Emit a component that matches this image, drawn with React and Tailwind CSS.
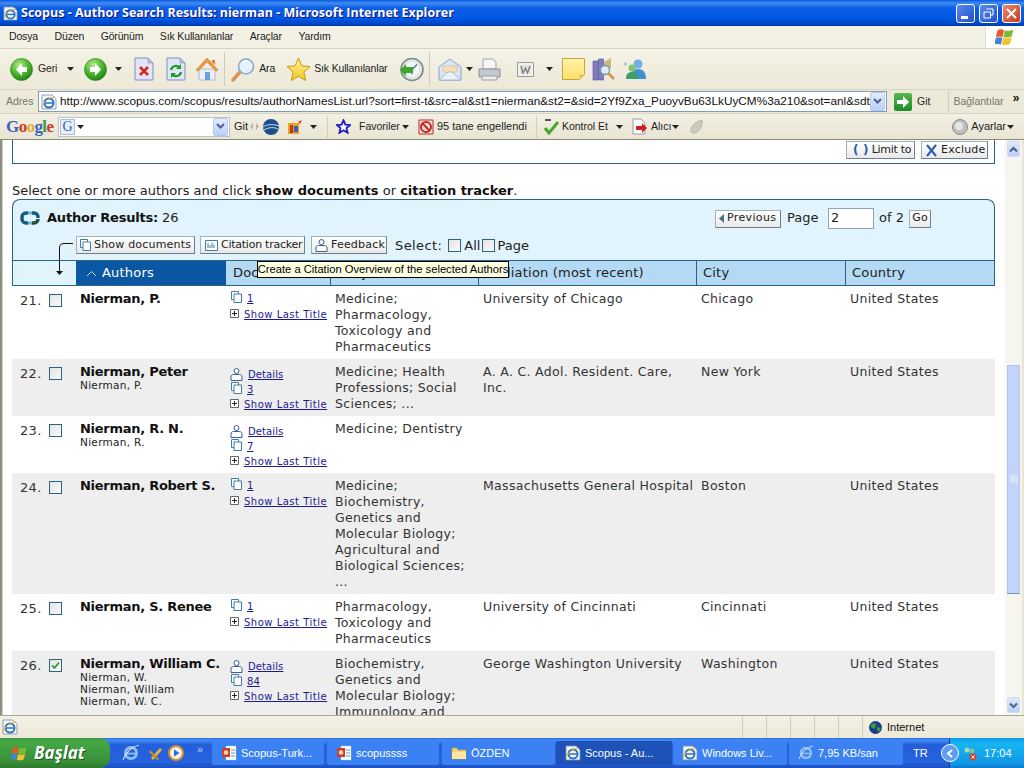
import React from "react";

const Caret = ({ className = "" }) => (
  <svg width="7" height="4" viewBox="0 0 7 4" className={className}><path d="M0 0h7L3.500 4z" fill="#222" /></svg>
);

const NavCircle = ({ dir = "left", id }) => (
  <svg width="23" height="23" viewBox="0 0 23 23">
    <defs>
      <radialGradient id={id} cx="40%" cy="30%" r="75%">
        <stop offset="0" stopColor="#b4ea8f" /><stop offset=".55" stopColor="#4cb52c" /><stop offset="1" stopColor="#1d7a14" />
      </radialGradient>
    </defs>
    <circle cx="11.500" cy="11.500" r="11" fill={`url(#${id})`} stroke="#2d8a22" strokeWidth=".7" />
    <path d={dir === "left" ? "M12 5l-6 6.500 6 6.500v-4h5v-5h-5z" : "M11 5l6 6.500-6 6.500v-4H6v-5h5z"} fill="#fff" />
  </svg>
);

const DocBase = ({ children }) => (
  <svg width="20" height="24" viewBox="0 0 20 24">
    <path d="M1 1h13l5 5v17H1z" fill="#dfe6f7" stroke="#7f8fb5" />
    <path d="M14 1v5h5z" fill="#b9c6e6" stroke="#7f8fb5" strokeWidth=".6" />
    {children}
  </svg>
);

const StopIcon = () => <DocBase><path d="M6 10l8 8M14 10l-8 8" stroke="#d9281c" strokeWidth="2.600" /></DocBase>;
const RefreshIcon = () => (
  <DocBase>
    <path d="M5 13a5 5 0 0 1 9-2" fill="none" stroke="#1f9a2a" strokeWidth="2.200" />
    <path d="M15 7v5h-5z" fill="#1f9a2a" />
    <path d="M15 15a5 5 0 0 1-9 2" fill="none" stroke="#1f9a2a" strokeWidth="2.200" />
    <path d="M5 21v-5h5z" fill="#1f9a2a" />
  </DocBase>
);
const HomeIcon = () => (
  <svg width="24" height="24" viewBox="0 0 24 24">
    <path d="M4 12h16v11H4z" fill="#e9eef7" stroke="#9aa7bd" strokeWidth=".7" />
    <path d="M10 15h5v8h-5z" fill="#6b9fd8" />
    <path d="M1 13L12 1l11 12-2 1-9-9-9 9z" fill="#ee9b3c" stroke="#c87520" strokeWidth=".6" />
    <path d="M17 3h3v5l-3-3z" fill="#d9812c" />
  </svg>
);
const SearchIcon = () => (
  <svg width="25" height="25" viewBox="0 0 25 25">
    <path d="M2 23l7-8" stroke="#d89358" strokeWidth="3.500" strokeLinecap="round" />
    <circle cx="15" cy="9.500" r="7.500" fill="#e6f2fb" stroke="#86aacb" strokeWidth="1.600" />
    <path d="M11 7a5 5 0 0 1 5-3" stroke="#fff" strokeWidth="1.500" fill="none" />
  </svg>
);
const StarIcon = () => (
  <svg width="25" height="25" viewBox="0 0 25 25">
    <defs><linearGradient id="st" x1="0" y1="0" x2="0" y2="1"><stop offset="0" stopColor="#fff39a" /><stop offset="1" stopColor="#f2c81e" /></linearGradient></defs>
    <path d="M12.500 1l3.400 7.800 8.100.8-6.100 5.500 1.800 8.400-7.200-4.300-7.200 4.300 1.800-8.400L1 9.600l8.100-.8z" fill="url(#st)" stroke="#c39a12" />
  </svg>
);
const HistoryIcon = () => (
  <svg width="25" height="25" viewBox="0 0 25 25">
    <circle cx="13" cy="12.500" r="11" fill="#dfe7e4" stroke="#7d8a8d" strokeWidth="1.600" />
    <circle cx="13" cy="12.500" r="7.500" fill="#f3f6f7" />
    <path d="M13 12.500l5-5M13 12.500v5" stroke="#3b6aa8" strokeWidth="1.200" />
    <path d="M1 13l6-6v3h7v6H7v3z" fill="#3fa52b" />
  </svg>
);
const MailIcon = () => (
  <svg width="24" height="24" viewBox="0 0 24 24">
    <path d="M1 10L12 2l11 8v13H1z" fill="#dbe7f6" stroke="#86a4c9" />
    <path d="M5 9h14v5l-7 4-7-4z" fill="#f6dfb6" stroke="#cfae78" strokeWidth=".5" />
    <path d="M1 23l9-8h4l9 8z" fill="#edf3fb" stroke="#86a4c9" strokeWidth=".7" />
  </svg>
);
const PrinterIcon = () => (
  <svg width="23" height="23" viewBox="0 0 23 23">
    <path d="M5 1h10l3 3v7H5z" fill="#f5f5f5" stroke="#a0a5ad" />
    <path d="M1 11h21v8H1z" fill="#c4c8cf" stroke="#8a8f98" />
    <path d="M4 18h15v4H4z" fill="#eceef1" stroke="#9a9fa7" />
  </svg>
);
const WordIcon = () => (
  <svg width="17" height="17" viewBox="0 0 17 17">
    <path d="M.5 1.500h16v14H.5z" fill="#f2f2f0" stroke="#9a9a96" />
    <path d="M3 4h11v9H3z" fill="#e1e1de" />
    <path d="M4 5l2 7 2.500-5 2 5L13 5" fill="none" stroke="#777" strokeWidth="1.200" />
  </svg>
);
const NoteIcon = () => (
  <svg width="23" height="22" viewBox="0 0 23 22">
    <defs><linearGradient id="nt" x1="0" y1="0" x2="0" y2="1"><stop offset="0" stopColor="#fff3a8" /><stop offset="1" stopColor="#ffe06a" /></linearGradient></defs>
    <path d="M.5.500h22v16l-5 5H.5z" fill="url(#nt)" stroke="#c9a437" />
    <path d="M17.500 21.500v-5h5z" fill="#e5c45a" />
  </svg>
);
const ResearchIcon = () => (
  <svg width="23" height="24" viewBox="0 0 23 24">
    <path d="M1 4h5v19H1zM6.500 2h5v21h-5z" fill="#7f7dbd" stroke="#55539a" strokeWidth=".6" />
    <path d="M12 5l7-4v10l-7 7z" fill="#c7b783" />
    <circle cx="13" cy="13" r="4.500" fill="#dcecf8" stroke="#7d93a8" strokeWidth="1.300" />
    <path d="M16 16l6 6" stroke="#c79a45" strokeWidth="2.500" />
  </svg>
);
const MessengerIcon = () => (
  <svg width="24" height="21" viewBox="0 0 24 21">
    <circle cx="15" cy="5" r="4.500" fill="#6fb1e5" />
    <path d="M7 20c0-7 3-10 8-10s8 3 8 10z" fill="#3f93ce" />
    <circle cx="9" cy="9" r="3.500" fill="#7ec66a" />
    <path d="M3 20c0-5 2-7 6-7s6 2 6 7z" fill="#3f9c6f" />
    <path d="M1 5h3M2.500 3.500v3" stroke="#7aa" strokeWidth=".8" />
  </svg>
);
const IEIcon = ({ size = 16 }) => (
  <svg width={size} height={size} viewBox="0 0 16 16" className="shrink-0">
    <path d="M1 1h10l4 4v10H1z" fill="#f6f6f6" stroke="#7a8fa8" strokeWidth=".8" />
    <circle cx="8" cy="9" r="4.500" fill="none" stroke="#2b74c7" strokeWidth="2" />
    <path d="M4 9h8" stroke="#2b74c7" strokeWidth="1.500" />
    <path d="M1 13C3 7 9 3 14 3" stroke="#e6b13a" strokeWidth="1" fill="none" />
  </svg>
);
const Eglyph = ({ size = 16, color = "#8fc0f2" }) => (
  <svg width={size} height={size} viewBox="0 0 16 16" className="shrink-0">
    <circle cx="8" cy="8" r="5" fill="none" stroke={color} strokeWidth="2.400" />
    <path d="M3.500 8.500h9" stroke={color} strokeWidth="1.600" />
    <path d="M1 14C3 8 9 2 15 1" stroke="#d7e9fb" strokeWidth=".9" fill="none" />
  </svg>
);
const WinFlag = ({ size = 24 }) => (
  <svg width={size} height={size} viewBox="0 0 24 24">
    <path d="M3 4c3-2 5-1 8 0l-2 8c-3-1-5-1-8 0z" fill="#e8582a" />
    <path d="M12 4c3 1 6 1 10-1l-2 8c-3 2-7 2-10 1z" fill="#7cbb32" />
    <path d="M1 13c3-1 5-1 8 0l-2 8c-3-1-5-1-8 0z" fill="#3d86d8" />
    <path d="M10 13c3 1 6 1 10-1l-2 8c-3 2-7 2-10 1z" fill="#f4c22e" />
  </svg>
);
const DropBtn = ({ w = "w-[15px]", h = "h-[19px]" }) => (
  <span className={`${w} ${h} shrink-0 flex items-center justify-center rounded-[2px] border border-[#b4c8f2] bg-[linear-gradient(#e3ecfd,#bccff8)]`}>
    <svg width="9" height="7" viewBox="0 0 9 7"><path d="M1 1l3.500 3.500L8 1" fill="none" stroke="#4c5f96" strokeWidth="2" /></svg>
  </span>
);

const StackDocs = () => (
  <svg width="11" height="12" viewBox="0 0 11 12" className="shrink-0">
    <path d="M.5.500h7v8h-7z" fill="#fff" stroke="#3f7fa6" />
    <path d="M3 3h7.500v8.500H3z" fill="#fff" stroke="#3f7fa6" />
  </svg>
);
const Person = () => (
  <svg width="13" height="13" viewBox="0 0 13 13" className="shrink-0">
    <circle cx="6.500" cy="3" r="2.500" fill="#fff" stroke="#3b5d95" />
    <path d="M1 12.500V9c0-1.500 1-2.500 2.500-2.500h6C11 6.500 12 7.500 12 9v3.500z" fill="#fff" stroke="#3b5d95" />
  </svg>
);
const PlusBox = () => (
  <svg width="9" height="9" viewBox="0 0 9 9" className="shrink-0">
    <path d="M.5.500h8v8h-8z" fill="#fff" stroke="#666" />
    <path d="M2 4.500h5M4.500 2v5" stroke="#222" />
  </svg>
);

const Check = ({ checked }) => (
  <span className="w-[13px] h-[13px] shrink-0 flex items-center justify-center border border-[#2a6480] bg-[linear-gradient(135deg,#e4e4e4,#fafafa)]">
    {checked && (
      <svg width="9" height="9" viewBox="0 0 9 9"><path d="M1 4.500l2.500 2.500L8 1.500" fill="none" stroke="#2f9a34" strokeWidth="1.800" /></svg>
    )}
  </span>
);

const Btn = ({ className = "", children }) => (
  <span className={`h-[18px] flex items-center gap-[3px] px-[3px] text-[11px] tracking-[.2px] text-[#222] border border-[#9fb1bb] border-r-[#6f7f89] border-b-[#6f7f89] bg-[linear-gradient(#ffffff,#e9e9e9)] whitespace-nowrap ${className}`}>
    {children}
  </span>
);

const DocLink = ({ children, wide }) => (
  <a className={`text-[10px] leading-[15px] whitespace-nowrap text-[#1b1b8f] underline ${wide ? "tracking-[.5px]" : "tracking-[.1px]"}`}>{children}</a>
);

const rows = [
  { n: "21.", name: "Nierman, P.", alts: [], details: false, docs: "1", subj: ["Medicine;", "Pharmacology,", "Toxicology and", "Pharmaceutics"], aff: "University of Chicago", city: "Chicago", country: "United States" },
  { n: "22.", name: "Nierman, Peter", alts: ["Nierman, P."], details: true, docs: "3", subj: ["Medicine; Health", "Professions; Social", "Sciences; ..."], aff: "A. A. C. Adol. Resident. Care, Inc.", city: "New York", country: "United States" },
  { n: "23.", name: "Nierman, R. N.", alts: ["Nierman, R."], details: true, docs: "7", subj: ["Medicine; Dentistry"], aff: "", city: "", country: "" },
  { n: "24.", name: "Nierman, Robert S.", alts: [], details: false, docs: "1", subj: ["Medicine;", "Biochemistry,", "Genetics and", "Molecular Biology;", "Agricultural and", "Biological Sciences;", "..."], aff: "Massachusetts General Hospital", city: "Boston", country: "United States" },
  { n: "25.", name: "Nierman, S. Renee", alts: [], details: false, docs: "1", subj: ["Pharmacology,", "Toxicology and", "Pharmaceutics"], aff: "University of Cincinnati", city: "Cincinnati", country: "United States" },
  { n: "26.", name: "Nierman, William C.", alts: ["Nierman, W.", "Nierman, William", "Nierman, W. C."], details: true, docs: "84", subj: ["Biochemistry,", "Genetics and", "Molecular Biology;", "Immunology and"], aff: "George Washington University", city: "Washington", country: "United States", checked: true },
];

const cols = "grid grid-cols-[64px_150px_104px_148px_218px_149px_150px]";

const Row = ({ r, i }) => (
  <div className={`${cols} pt-[5px] pb-1 min-h-[57px] text-[12.500px] leading-4 tracking-[.32px] text-[#333] ${i % 2 ? "bg-[#eeeeee]" : "bg-white"}`}>
    <div className="flex items-start pl-2">
      <span className="w-[29px] mt-[2px] text-[13px]">{r.n}</span>
      <span className="mt-[3px]"><Check checked={r.checked} /></span>
    </div>
    <div className="pl-1">
      <div className="text-[13px] leading-4 tracking-[-.27px] font-bold text-[#111] whitespace-nowrap">{r.name}</div>
      <div className="-mt-px">
        {r.alts.map((a) => (
          <div key={a} className="text-[10.500px] leading-3 tracking-[.3px] text-[#222]">{a}</div>
        ))}
      </div>
    </div>
    <div className="pl-1 flex flex-col">
      {r.details && (
        <div className="h-[15px] mt-[3px] flex items-center gap-[5px]"><Person /><DocLink>Details</DocLink></div>
      )}
      <div className="h-[15px] flex items-center gap-[5px] pl-px"><span className="mt-[-3px]"><StackDocs /></span><DocLink>{r.docs}</DocLink></div>
      <div className={`h-[15px] flex items-center gap-[5px] ${r.details ? "" : "mt-[1px]"}`}><span className="mt-[-3px]"><PlusBox /></span><DocLink wide>Show Last Title</DocLink></div>
    </div>
    <div className="pl-[5px]">{r.subj.map((s) => <div key={s} className="whitespace-nowrap">{s}</div>)}</div>
    <div className="pl-[5px]">{r.aff}</div>
    <div className="pl-[5px]">{r.city}</div>
    <div className="pl-[5px]">{r.country}</div>
  </div>
);

const Head = ({ children, className = "border-l border-[#2a6480]" }) => (
  <div className={`flex items-center bg-[#b3d9f5] pl-[6px] text-[13px] tracking-[.2px] text-[#222] ${className}`}>{children}</div>
);

const ScrollBtn = ({ up }) => (
  <span className="mx-[2px] h-[16px] flex items-center justify-center rounded-[2px] border border-[#d2dcf6] bg-[linear-gradient(#dfe8fd,#bccff9)]">
    <svg width="9" height="7" viewBox="0 0 9 7"><path d={up ? "M1 5.500l3.500-3.500L8 5.500" : "M1 1.500l3.500 3.500L8 1.500"} fill="none" stroke="#4d6185" strokeWidth="2" /></svg>
  </span>
);

const Task = ({ w, icon, label, active }) => (
  <div className={`${w} h-[24px] shrink-0 flex items-center gap-[4px] pl-[9px] rounded-[2px] text-white text-[11px] whitespace-nowrap ${active ? "bg-[#1e52b7]" : "bg-[#3c81f3]"}`}>
    {icon}
    <span>{label}</span>
  </div>
);
const PptIcon = () => (
  <svg width="16" height="16" viewBox="0 0 16 16" className="shrink-0">
    <path d="M5 1h10v14H5z" fill="#fff" stroke="#8da" strokeWidth=".4" />
    <path d="M1 3h8v9H1z" fill="#c8402b" />
    <circle cx="5" cy="7.500" r="2.300" fill="#f3d7a5" />
    <path d="M10 5h4M10 8h4M10 11h4" stroke="#7a8aa8" />
  </svg>
);
const FolderIcon = () => (
  <svg width="16" height="14" viewBox="0 0 16 14" className="shrink-0"><path d="M1 2h5l1 2h8v9H1z" fill="#f4d67c" stroke="#b8923a" strokeWidth=".6" /><path d="M1 6h14v7H1z" fill="#fbe6a2" /></svg>
);

export default function App() {
  return (
    <div className="w-[1024px] h-[768px] overflow-hidden flex flex-col bg-[#ece9d8] font-['Liberation_Sans',sans-serif]">
      {/* Title bar */}
      <div className="h-[26px] shrink-0 flex items-center pl-[3px] pr-[3px] bg-[linear-gradient(#0a5ae0_0%,#3f8cf3_12%,#0d5fe4_30%,#0058e6_70%,#0048c8_90%,#003dae_100%)]">
        <IEIcon size={15} />
        <span className="ml-[3px] font-['Open_Sans',sans-serif] font-bold text-[12.500px] text-white whitespace-nowrap [text-shadow:1px_1px_#0f1089]">Scopus - Author Search Results: nierman - Microsoft Internet Explorer</span>
        <div className="ml-auto flex gap-[4px]">
          <span className="w-[19px] h-[19px] rounded-[3px] border border-white bg-[linear-gradient(135deg,#5a8af0,#2350c8)] flex items-end pl-[4px] pb-[3px]"><span className="w-[7px] h-[3px] bg-white" /></span>
          <span className="w-[19px] h-[19px] rounded-[3px] border border-white bg-[linear-gradient(135deg,#5a8af0,#2350c8)] flex items-center justify-center">
            <svg width="11" height="11" viewBox="0 0 11 11"><path d="M3.500 1h6.500v6H8M1 4h6.500v6H1z" fill="none" stroke="#fff" /></svg>
          </span>
          <span className="w-[19px] h-[19px] rounded-[3px] border border-white bg-[linear-gradient(135deg,#e88a70,#c63a1a)] flex items-center justify-center">
            <svg width="11" height="11" viewBox="0 0 11 11"><path d="M1 1l9 9M10 1l-9 9" stroke="#fff" strokeWidth="2" /></svg>
          </span>
        </div>
      </div>
      {/* Menu */}
      <div className="h-[23px] shrink-0 flex items-center pl-[9px] text-[10.500px] tracking-[-.15px] text-[#1c1c1c] bg-[#f3f0e4] border-b border-[#d8d4c2] gap-[16.500px]">
        <span>Dosya</span><span>Düzen</span><span>Görünüm</span><span>Sık Kullanılanlar</span><span>Araçlar</span><span>Yardım</span>
        <span className="ml-auto w-[39px] h-full flex items-center justify-center bg-white border-l border-[#e3e0d2]"><WinFlag size={20} /></span>
      </div>
      {/* Toolbar */}
      <div className="h-[41px] shrink-0 flex items-center pl-[10px] text-[10.500px] tracking-[-.15px] text-[#1c1c1c] bg-[linear-gradient(#f5f2e7,#ece9d8)] border-b border-[#d8d4c2]">
        <NavCircle dir="left" id="nb" />
        <span className="ml-[5px]">Geri</span>
        <Caret className="ml-[10px]" />
        <span className="ml-[10px]"><NavCircle dir="right" id="nf" /></span>
        <Caret className="ml-[8px]" />
        <span className="ml-[12px]"><StopIcon /></span>
        <span className="ml-[12px]"><RefreshIcon /></span>
        <span className="ml-[9px]"><HomeIcon /></span>
        <span className="ml-[5px] w-px h-[34px] bg-[#cfcbb8]" />
        <span className="ml-[6px]"><SearchIcon /></span>
        <span className="ml-[3px]">Ara</span>
        <span className="ml-[11px]"><StarIcon /></span>
        <span className="ml-[3px] whitespace-nowrap">Sık Kullanılanlar</span>
        <span className="ml-[12px]"><HistoryIcon /></span>
        <span className="ml-[5px] w-px h-[34px] bg-[#cfcbb8]" />
        <span className="ml-[8px]"><MailIcon /></span>
        <Caret className="ml-[4px]" />
        <span className="ml-[5px]"><PrinterIcon /></span>
        <span className="ml-[16px]"><WordIcon /></span>
        <Caret className="ml-[12px]" />
        <span className="ml-[9px]"><NoteIcon /></span>
        <span className="ml-[7px]"><ResearchIcon /></span>
        <span className="ml-[8px]"><MessengerIcon /></span>
      </div>
      {/* Address */}
      <div className="h-[24px] shrink-0 flex items-center pl-[6px] text-[10.500px] bg-[#ece9d8] border-b border-[#d8d4c2]">
        <span className="w-[32px] text-[#77756a]">Adres</span>
        <div className="w-[849px] h-[21px] flex items-center pl-[2px] pr-px bg-white border border-[#7f9db9]">
          <IEIcon size={16} />
          <span className="ml-[3px] flex-1 min-w-0 overflow-hidden whitespace-nowrap text-[11.800px] text-[#111]">http://www.scopus.com/scopus/results/authorNamesList.url?sort=first-t&amp;src=al&amp;st1=nierman&amp;st2=&amp;sid=2Yf9Zxa_PuoyvBu63LkUyCM%3a210&amp;sot=anl&amp;sdt=anl&amp;sl=25</span>
          <DropBtn />
        </div>
        <span className="ml-[7px] w-[18px] h-[18px] rounded-[2px] bg-[linear-gradient(#54b948,#1f8a2b)] flex items-center justify-center">
          <svg width="14" height="12" viewBox="0 0 14 12"><path d="M7 0l6 6-6 6V8H1V4h6z" fill="#fff" /></svg>
        </span>
        <span className="ml-[5px] text-[#222]">Git</span>
        <span className="ml-[18px] w-px h-[22px] bg-[#d2ceba]" />
        <span className="ml-[4px] text-[#77756a] whitespace-nowrap">Bağlantılar</span>
        <span className="ml-[9px] mt-[-8px] text-[12px] leading-3 font-bold text-[#111]">»</span>
      </div>
      {/* Google bar */}
      <div className="h-[25px] shrink-0 flex items-center pl-[6px] text-[11px] text-[#222] bg-[linear-gradient(#f3f0e4,#e8e5d4)]">
        <span className="w-[52px] font-['Liberation_Serif',serif] font-bold text-[17px] leading-5 tracking-[-.6px]">
          <span className="text-[#3a62c4]">G</span><span className="text-[#d0392b]">o</span><span className="text-[#e3b02c]">o</span><span className="text-[#3a62c4]">g</span><span className="text-[#3c9b3e]">l</span><span className="text-[#d0392b]">e</span>
        </span>
        <div className="w-[172px] h-[20px] flex items-center pl-[1px] pr-px bg-white border border-[#b9c4cc]">
          <span className="w-[15px] h-[16px] flex items-center justify-center border border-[#aebfd4] bg-[#e6eef7] font-['Liberation_Serif',serif] text-[14px] leading-4 text-[#3a62c4]">G</span>
          <Caret className="ml-[2px]" />
          <span className="ml-auto"><DropBtn h="h-[18px]" /></span>
        </div>
        <span className="ml-[4px] w-[13px]">Git</span>
        <svg className="ml-[3px]" width="9" height="7" viewBox="0 0 9 7"><path d="M3 0v7L0 3.500zM6 0v7l3-3.500z" fill="#b8b6a8" /></svg>
        <svg className="ml-[4px]" width="16" height="16" viewBox="0 0 16 16"><circle cx="8" cy="8" r="8" fill="#1f4f8a" /><path d="M0 8c4-3 11-3 16-1M1 11c5-3 10-3 14-1" stroke="#cfe1f3" fill="none" /></svg>
        <svg className="ml-[8px]" width="16" height="17" viewBox="0 0 16 17"><path d="M1 5h11v11H1z" fill="#e4a51f" /><path d="M3 7h3v8H3z" fill="#c7331f" /><path d="M7 8h4v6H7z" fill="#3b5fb4" /><path d="M9 1l2 3 4-2-2 4" fill="#c7331f" /></svg>
        <Caret className="ml-[7px]" />
        <span className="ml-[10px] w-px h-[22px] bg-[#d2ceba]" />
        <svg className="ml-[8px]" width="15" height="15" viewBox="0 0 25 25"><path d="M12.500 2l3.100 7.300 7.900.7-6 5.200 1.800 7.800-6.800-4.100-6.800 4.100 1.800-7.800-6-5.200 7.900-.7z" fill="#fff" stroke="#1a1ac4" strokeWidth="3" /></svg>
        <span className="ml-[8px] w-[42px] text-[10.500px]">Favoriler</span><Caret className="ml-px" />
        <svg className="ml-[9px]" width="16" height="16" viewBox="0 0 16 16"><path d="M1 1h14v14H1z" fill="#f4dcd8" stroke="#a33" /><circle cx="8" cy="8" r="5" fill="none" stroke="#c92a20" strokeWidth="2" /><path d="M4 4l8 8" stroke="#c92a20" strokeWidth="2" /></svg>
        <span className="ml-[3px] whitespace-nowrap">95 tane engellendi</span>
        <span className="ml-[9px] w-px h-[22px] bg-[#d2ceba]" />
        <svg className="ml-[7px]" width="16" height="16" viewBox="0 0 16 16"><path d="M1 9l4 5 9-11" fill="none" stroke="#4ca62e" strokeWidth="3" /><path d="M1 1h6" stroke="#556" strokeWidth="2" /></svg>
        <span className="ml-[2px] whitespace-nowrap text-[10.500px]">Kontrol Et</span>
        <Caret className="ml-[8px]" />
        <svg className="ml-[8px]" width="17" height="17" viewBox="0 0 17 17"><path d="M2 1h8l4 4v11H2z" fill="#fff" stroke="#999" /><path d="M5 8h6V5l5 5-5 5v-3H5z" fill="#d21f1f" /></svg>
        <span className="ml-[3px] text-[10.500px]">Alıcı</span><Caret className="ml-px" />
        <svg className="ml-[10px]" width="15" height="15" viewBox="0 0 15 15"><path d="M2 13c-1-4 3-10 11-12 1 5-2 11-7 13z" fill="#cdcbbe" stroke="#b7b5a8" /></svg>
        <svg className="ml-auto" width="16" height="16" viewBox="0 0 16 16"><circle cx="8" cy="8" r="7.500" fill="#bfbfbf" stroke="#8a8a8a" /><circle cx="7" cy="7" r="4" fill="#e6e6e6" /></svg>
        <span className="ml-[3px]">Ayarlar</span><Caret className="ml-px mr-[10px]" />
      </div>

      {/* Page */}
      <div className="h-[576px] shrink-0 flex border-t border-[#8b8b78] bg-white">
        <div className="w-[3px] shrink-0 bg-[#8f8f7f] border-r border-[#d6d3c3]" />
        <div className="w-[1002px] shrink-0 pl-[9px] pr-[10px] overflow-hidden font-['DejaVu_Sans',sans-serif]">
          <div className="h-[24px] flex justify-end items-start gap-[6px] pr-[6px] pt-[1px] border border-t-0 border-[#2a6480]">
            <Btn className="w-[69px]"><span className="text-[#2a5db0] font-bold text-[12px] pl-[3px]">( )</span><span className="tracking-[-.3px]">Limit to</span></Btn>
            <Btn className="w-[67px]"><svg width="13" height="13" viewBox="0 0 13 13" className="shrink-0"><path d="M2 1l9 11M11 1L2 12" stroke="#2a5db0" strokeWidth="2" /></svg>Exclude</Btn>
          </div>
          <p className="mt-[19px] h-4 text-[13px] leading-4 text-[#222] whitespace-nowrap">Select one or more authors and click <b className="text-[#111]">show documents</b> or <b className="text-[#111]">citation tracker</b>.</p>
          <div className="relative rounded-t-[8px] border border-b-0 border-[#2a6480] bg-[#e1f4fd]">
            <div className="h-[36px] flex items-center pl-[7px] text-[13px] text-[#222]">
              <svg width="20" height="14" viewBox="0 0 20 14" className="shrink-0">
                <path d="M8 2H6a4 4 0 0 0-4 4v2a4 4 0 0 0 4 4h2" fill="none" stroke="#175a86" strokeWidth="3.500" />
                <path d="M8 2h4M8 12h4" stroke="#6cb4d6" strokeWidth="3" />
                <path d="M12 2h2a4 4 0 0 1 4 4v1" fill="none" stroke="#175a86" strokeWidth="3.500" />
                <path d="M18 8a4 4 0 0 1-4 4h-2" fill="none" stroke="#24503f" strokeWidth="3.500" />
              </svg>
              <b className="ml-[7px] tracking-[-.2px] text-[#111]">Author Results:</b>
              <span className="ml-[4px]">26</span>
              <div className="ml-auto flex items-center pr-[63px]">
                <Btn className="w-[66px] pl-[3px] mt-px"><svg width="5" height="9" viewBox="0 0 5 9" className="shrink-0"><path d="M5 0v9L0 4.500z" fill="#4a6d8c" /></svg><span className="tracking-[.35px]">Previous</span></Btn>
                <span className="ml-[6px] w-[41px]">Page</span>
                <span className="w-[46px] h-[21px] flex items-center pl-[2px] border border-[#8fa5b3] bg-white">2</span>
                <span className="ml-[5px]">of 2</span>
                <Btn className="ml-[5px] w-[22px] justify-center mt-px">Go</Btn>
              </div>
            </div>
            <div className="h-[18px] flex items-center pl-[63px] text-[13px] text-[#222]">
              <Btn className="w-[119px] pl-[3px]"><StackDocs />Show documents</Btn>
              <Btn className="ml-[5px] w-[105px] pl-[4px]">
                <svg width="13" height="11" viewBox="0 0 13 11" className="shrink-0"><path d="M.5.500h12v10H.5z" fill="#fff" stroke="#3f7fa6" /><path d="M3 3v5M5 5v3M7 2.500V8M9 4.500V8" stroke="#3f7fa6" /></svg>
                <span className="tracking-[-.25px]">Citation tracker</span>
              </Btn>
              <Btn className="ml-[6px] w-[76px] pl-[3px]"><Person />Feedback</Btn>
              <span className="ml-[8px] mt-[2px] tracking-[.4px]">Select:</span>
              <span className="ml-[6px] mt-[1px]"><Check /></span>
              <span className="ml-[3px] mt-[2px]">All</span>
              <span className="ml-[2px] mt-[1px]"><Check /></span>
              <span className="ml-[2px] mt-[2px]">Page</span>
            </div>
            <div className={`${cols} -mx-px mt-[6px] h-[26px] border-t border-b border-[#2a6480]`}>
              <div />
              <div className="flex items-center gap-[5px] pl-[10px] bg-[#0b57a4] text-white text-[13px] tracking-[.2px]">
                <svg width="11" height="7" viewBox="0 0 11 7" className="shrink-0"><path d="M1 6l4.500-4.500L10 6" fill="none" stroke="#bcd8f0" strokeWidth="1" /></svg>
                <span>Authors</span>
              </div>
              <Head className="pl-[7px]">Documents</Head>
              <Head>Subject Area</Head>
              <Head>Affiliation (most recent)</Head>
              <Head>City</Head>
              <Head className="border-l border-r border-[#2a6480]">Country</Head>
            </div>
            {/* Selection elbow arrow */}
            <svg className="absolute left-[43px] top-[42px]" width="21" height="34" viewBox="0 0 21 34">
              <path d="M17 1.500H8Q3.500 1.500 3.500 6v24" fill="none" stroke="#111" />
              <path d="M0 29h7l-3.500 4z" fill="#111" />
            </svg>
            {/* Tooltip */}
            <div className="absolute left-[244px] top-[61px] w-[252px] h-[17px] flex items-center justify-center border border-black bg-[#ffffe1] font-['Liberation_Sans',sans-serif] text-[11.200px] text-black whitespace-nowrap">
              Create a Citation Overview of the selected Authors
            </div>
          </div>
          {rows.map((r, i) => <Row key={r.n} r={r} i={i} />)}
        </div>
        <div className="w-[17px] shrink-0 flex flex-col pt-[1px] pb-[2px] bg-[#f7f5ef]">
          <ScrollBtn up />
          <div className="mt-[208px] mx-[2px] h-[229px] flex items-center justify-center border border-[#b4c4ea] border-b-[#7f8fb0] bg-[#c3d3fb]">
            <svg width="8" height="9" viewBox="0 0 8 9"><path d="M0 1h8M0 3h8M0 5h8M0 7h8" stroke="#e8eefc" /></svg>
          </div>
          <div className="flex-1" />
          <ScrollBtn />
        </div>
        <div className="w-[2px] shrink-0 bg-[#e8e5d4]" />
      </div>

      {/* Status bar */}
      <div className="h-[23px] shrink-0 flex items-center pl-[2px] text-[11px] text-[#111] border-t border-[#a8a696] bg-[linear-gradient(#f4f1e5,#ece9d8)]">
        <IEIcon size={16} />
        <div className="ml-[724px] flex h-full">
          {[0, 1, 2, 3, 4].map((k) => <span key={k} className="w-[24px] border-l border-[#d0ccba]" />)}
          <span className="border-l border-[#d0ccba]" />
        </div>
        <svg className="ml-[6px]" width="13" height="13" viewBox="0 0 13 13"><circle cx="6.500" cy="6.500" r="6.500" fill="#1a3d8f" /><path d="M2 3l4-1 1 3-2 3-3-2zM8 6l4 1-2 4-2-2z" fill="#3ea02f" /></svg>
        <span className="ml-[5px]">Internet</span>
      </div>

      {/* Taskbar */}
      <div className="h-[30px] shrink-0 flex items-center text-white bg-[linear-gradient(#2a70e4_0%,#3f8cf3_8%,#245edb_22%,#2663de_80%,#1a4fbf_100%)]">
        <div className="w-[110px] h-full shrink-0 flex items-center pl-[11px] gap-[6px] rounded-r-[10px] bg-[linear-gradient(#3f9a3f,#45a845_15%,#388e38_80%,#2d7a2d)]">
          <WinFlag size={17} />
          <span className="font-['Open_Sans',sans-serif] font-bold italic text-[17px] [text-shadow:1px_1px_#1a5a1a]">Başlat</span>
        </div>
        <span className="ml-[12px]"><Eglyph size={18} /></span>
        <svg className="ml-[8px]" width="15" height="15" viewBox="0 0 15 15"><path d="M3 12L12 2l2 2-9 10z" fill="#e8b23a" /><path d="M2 4l9 9-2 1-8-8z" fill="#c98a1f" /></svg>
        <svg className="ml-[5px]" width="16" height="16" viewBox="0 0 16 16"><circle cx="8" cy="8" r="7" fill="#f4f4f4" stroke="#d98a2a" strokeWidth="2" /><path d="M6 4.500v7l5.500-3.500z" fill="#2a6fc4" /></svg>
        <span className="w-[28px] pl-[13px] mt-[-8px] text-[11px] leading-3 text-[#b9d3f7]">»</span>
        <div className="flex items-center">
          <Task w="w-[112px]" icon={<PptIcon />} label="Scopus-Turk..." />
          <span className="w-[3px]" />
          <Task w="w-[112px]" icon={<PptIcon />} label="scopussss" />
          <span className="w-[3px]" />
          <Task w="w-[113px]" icon={<FolderIcon />} label="ÖZDEN" />
          <span className="w-px" />
          <Task w="w-[116px]" icon={<IEIcon size={16} />} label="Scopus - Au..." active />
          <span className="w-px" />
          <Task w="w-[114px]" icon={<IEIcon size={16} />} label="Windows Liv..." />
          <span className="w-[2px]" />
          <Task w="w-[114px]" icon={<Eglyph size={16} />} label="7,95 KB/san" />
        </div>
        <span className="ml-[10px] text-[11px]">TR</span>
        <div className="ml-auto w-[75px] h-full flex items-center text-[11px] border-l border-[#0f3f9e] bg-[linear-gradient(#0e9be8,#16b4f2_20%,#1197e6_85%,#0a78d0)]">
          <span className="-ml-[9px] w-[18px] h-[18px] rounded-full bg-[#5d9df2] border border-white flex items-center justify-center">
            <svg width="8" height="9" viewBox="0 0 8 9"><path d="M6 1L2 4.500 6 8" fill="none" stroke="#fff" strokeWidth="2" /></svg>
          </span>
          <svg className="ml-[4px]" width="14" height="15" viewBox="0 0 14 15"><circle cx="4" cy="4" r="2.500" fill="#a6dcb0" /><circle cx="9" cy="5" r="2.500" fill="#7fc78f" /><circle cx="10" cy="11" r="3.500" fill="#d9402a" /><path d="M8.500 9.500l3 3M11.500 9.500l-3 3" stroke="#fff" /></svg>
          <span className="ml-[7px]">17:04</span>
        </div>
      </div>
    </div>
  );
}
